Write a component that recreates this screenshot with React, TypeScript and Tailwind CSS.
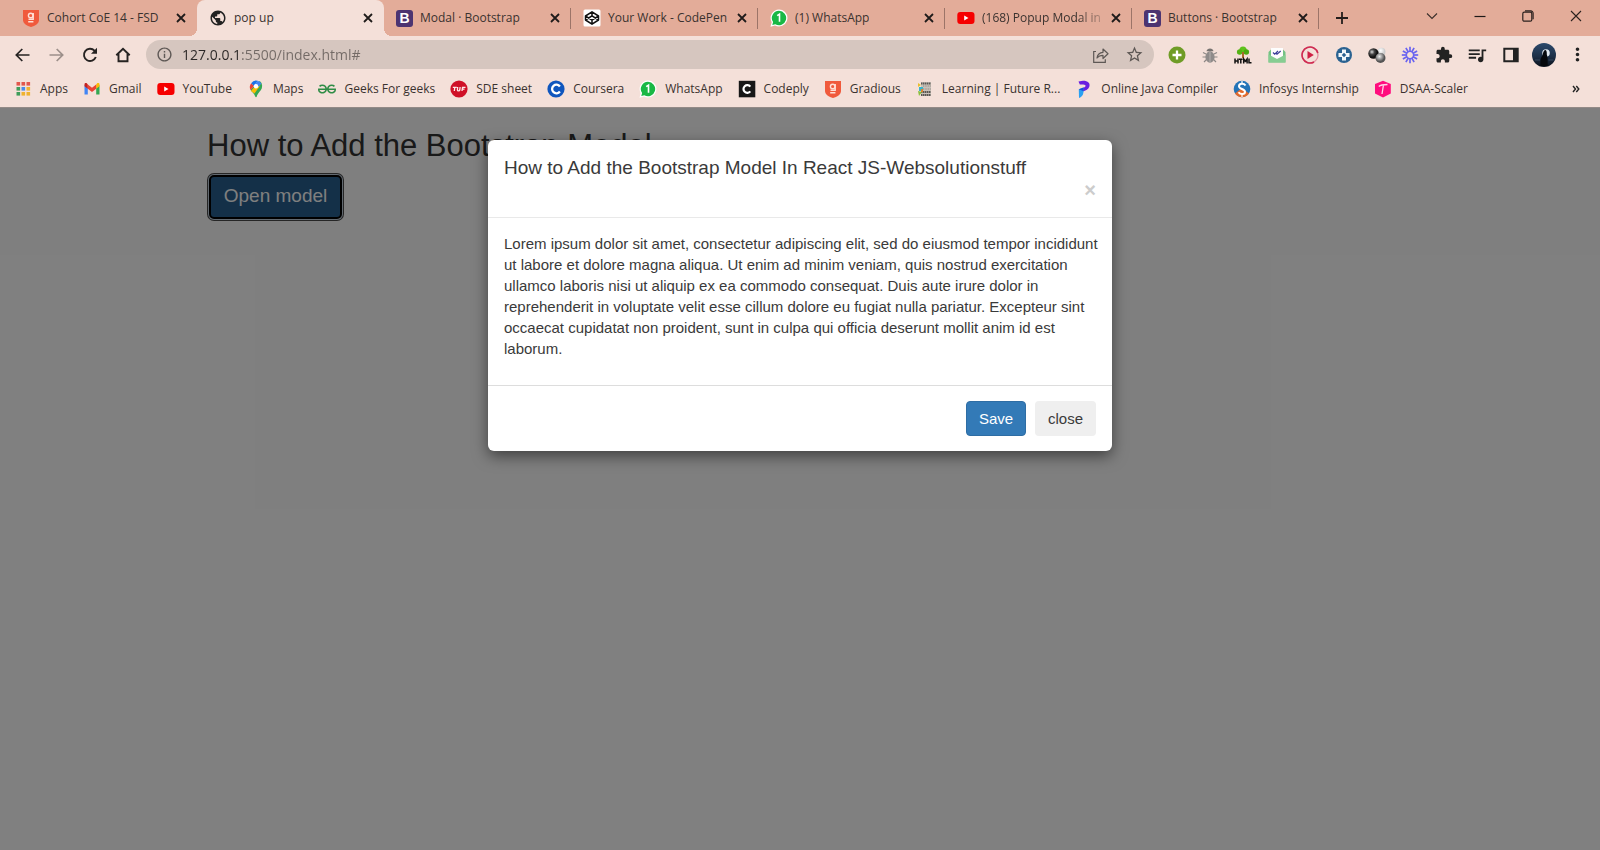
import React from 'react';
import { MdPublic, MdExtension, MdQueueMusic, MdInfoOutline, MdStarBorder, MdMoreVert } from 'react-icons/md';
import { SiGeeksforgeeks } from 'react-icons/si';

const svg = 'block h-[18px] w-[18px] shrink-0';

const ShieldIcon = () => (
  <svg viewBox="0 0 18 18" className={svg}>
    <path d="M1 1h16v10c0 3.500-4 6-8 7-4-1-8-3.500-8-7z" fill="#f05a3c" />
    <circle cx="8.700" cy="6.500" r="2.300" fill="none" stroke="#ffe0d6" strokeWidth="1.400" />
    <path d="M11.200 4v6.200H6.500M6.200 12.800h5.200" fill="none" stroke="#ffe0d6" strokeWidth="1.400" />
  </svg>
);

const BootstrapIcon = () => (
  <span className="flex h-[17px] w-[17px] shrink-0 items-center justify-center rounded-[3px] bg-[#4c3471] font-['Liberation_Sans',sans-serif] text-[14px] leading-none font-bold text-white">
    B
  </span>
);

const CodepenIcon = () => (
  <svg viewBox="0 0 18 18" className={svg} fill="none" stroke="#111" strokeWidth="1.500" strokeLinejoin="round">
    <rect x=".5" y=".5" width="17" height="17" rx="1.500" fill="#fff" stroke="none" />
    <path d="M9 2.800 15.500 7v4L9 15.200 2.500 11V7zM2.500 7 9 11.200 15.500 7M2.500 11 9 6.800l6.500 4.200M9 2.800v4M9 11.200v4" />
  </svg>
);

const WhatsAppIcon = () => (
  <svg viewBox="0 0 18 18" className={svg}>
    <path d="M9 .5a8.500 8.500 0 0 1 0 17c-1.500 0-2.800-.3-4-1L.5 17.700 1.700 13.200A8.500 8.500 0 0 1 9 .5z" fill="#fff" />
    <path d="M9 1.800a7.200 7.200 0 1 1-3.700 13.400L2.300 16l.8-2.900A7.200 7.200 0 0 1 9 1.800z" fill="#19b845" />
    <path d="M7.200 6.700 9.500 5.200v7.600" fill="none" stroke="#fff" strokeWidth="1.600" />
  </svg>
);

const YoutubeIcon = () => (
  <svg viewBox="0 0 18 18" className={svg}>
    <rect x=".3" y="3" width="17.200" height="12" rx="3" fill="#f60000" />
    <path d="M7.200 6.500 11.500 9l-4.300 2.500z" fill="#fff" />
  </svg>
);

const appColors = ['#e2574c', '#e2574c', '#e2574c', '#3f9d5a', '#4a8bea', '#efb22f', '#3f9d5a', '#efb22f', '#efb22f'];
const AppsIcon = () => (
  <svg viewBox="0 0 18 18" className={svg}>
    {appColors.map((color, i) => (
      <rect key={i} x={2.500 + (i % 3) * 5} y={2 + Math.floor(i / 3) * 5} width="3.600" height="3.600" fill={color} />
    ))}
  </svg>
);

const GmailIcon = () => (
  <svg viewBox="0 0 18 18" className={svg}>
    <path d="M1.500 5v9.500h3.300V8z" fill="#4285f4" />
    <path d="M16.500 5v9.500h-3.300V8z" fill="#34a853" />
    <path d="M13.200 4.500v4.300L16.500 6.200V4.500c0-1.500-1.500-1.800-2.300-1.200z" fill="#fbbc04" />
    <path d="M4.800 4.500 9 7.700l4.200-3.200v4.300L9 12 4.800 8.800z" fill="#ea4335" />
    <path d="M1.500 4.500v1.700l3.300 2.600V4.500l-1-1.200c-.9-.6-2.300-.3-2.300 1.200z" fill="#c5221f" />
  </svg>
);

const MapsIcon = () => (
  <svg viewBox="0 0 18 18" className={svg}>
    <path d="M3.400 9.800 12.800.9A6 6 0 0 1 15 6.700c0 4-4.300 5.500-5.300 10.100-.2.600-1.200.6-1.400 0-.7-3-3.300-4.700-4.900-7z" fill="#34a853" />
    <path d="M4.300 10.900 12 4.500A3 3 0 0 1 9 9z" fill="#fbbc04" />
    <path d="m4 11 3-3.400 4 1L7.500 13.500z" fill="#fbbc04" />
    <path d="M4.200 3.200 7.100 6l-3.500 4A6.300 6.300 0 0 1 4.200 3.200z" fill="#ea4335" />
    <path d="M4.200 3.200A6 6 0 0 1 10.700.8L7 6z" fill="#1a73e8" />
    <path d="M10.700.8a6 6 0 0 1 3.600 3L11 7 8 4z" fill="#4285f4" />
    <circle cx="9" cy="6.300" r="2.200" fill="#fff" />
  </svg>
);

const TufIcon = () => (
  <svg viewBox="0 0 18 18" className={svg}>
    <circle cx="9" cy="9" r="8.600" fill="#cf1027" />
    <path d="M2.800 7.300h4M4.800 7.300l-.5 3.700M7.700 7l-.3 3q0 .9 1.100.9t1.300-.9l.3-3M12 11l.5-3.700h3M12.300 9.200h2.200" fill="none" stroke="#ffe9e9" strokeWidth="1.300" />
  </svg>
);

const CourseraIcon = () => (
  <svg viewBox="0 0 18 18" className={svg}>
    <circle cx="9" cy="9" r="8.600" fill="#0f56be" />
    <path d="M12.900 11.500A4.300 4.300 0 1 1 12.900 6.500" fill="none" stroke="#fff" strokeWidth="2.300" />
  </svg>
);

const CodeplyIcon = () => (
  <svg viewBox="0 0 18 18" className={svg}>
    <path d="M.8.8h16.500v16.500H.8z" fill="#171717" />
    <path d="M12.300 11.300A3.800 3.800 0 1 1 12.300 6.700" fill="none" stroke="#fff" strokeWidth="2.200" />
  </svg>
);

const LearningIcon = () => (
  <svg viewBox="0 0 18 18" className={svg}>
    <path d="M5 2h10v14H5z" fill="#c9c1b9" />
    <path d="M5 3.500h10M5 12h10M5 15h10" stroke="#5b5753" strokeWidth="2" strokeDasharray="1.500 .5" />
    <path d="M7 6h8M7 9h8" stroke="#a39c95" strokeWidth="1.500" strokeDasharray="1 .7" />
    <path d="m2 3 3 2-3 2z" fill="#e8bf2b" />
    <path d="M3 7h4v4H3z" fill="#38b6c9" />
    <path d="m2 11 4 1-3 4z" fill="#8bbf3d" />
    <path d="M5 9h2v3H5z" fill="#e2832d" />
  </svg>
);

const ProgramizIcon = () => (
  <svg viewBox="0 0 18 18" className={svg}>
    <path d="M3.500 1.500 8 .8c5 0 7.500 2.400 6.300 6-.9 2.600-3.300 4-6.800 4.700V8C9.800 7.600 10.800 6.800 10.500 5.600 10 4.300 7 4.600 4.800 4.600z" fill="#6a1fe0" />
    <path d="M3.800 9.200 8.500 7.500v4c-.2 3-1 5-4.500 6.500z" fill="#2aa0f2" />
    <path d="M3.800 9.200 8.500 7.500v3.700z" fill="#1b4fd8" />
  </svg>
);

const InfosysIcon = () => (
  <svg viewBox="0 0 18 18" className={svg}>
    <circle cx="9" cy="9" r="8.300" fill="#2374b8" />
    <path d="M2 13.500A8.300 8.300 0 0 0 16 13.500L9 8z" fill="#e26a2c" />
    <path d="M12.500 5.500C11 3 6 3 6 6.200c0 3 6 2.600 6 5.600 0 3-4.800 3-6.500.4" fill="none" stroke="#fff" strokeWidth="2" />
    <path d="M9 1v3M9 14v3" stroke="#fff" strokeWidth="1.200" />
  </svg>
);

const ScalerIcon = () => (
  <svg viewBox="0 0 18 18" className={svg}>
    <path d="M9 .7 16.800 4v9.500L9 17.500 1 13.500V4z" fill="#ff0d7e" strokeLinejoin="round" />
    <path d="M4.800 6.500c2-2 5-2 8.700-2M9.500 4.800 8 14" fill="none" stroke="#ffd3e8" strokeWidth="1.300" />
  </svg>
);

const ShareIcon = () => (
  <svg viewBox="0 0 18 18" className={svg} fill="none" stroke="#5e5855" strokeWidth="1.200">
    <path d="M4 5.500H1.700v10.800h11.600v-3" />
    <path d="M5 12c.5-3.500 2.500-5.500 6-5.700V3l5 4.800-5 4.700V9.300c-2.500 0-4.500.8-6 2.700z" strokeLinejoin="round" />
  </svg>
);

const BackIcon = ({ forward = false }: { forward?: boolean }) => (
  <svg viewBox="0 0 18 18" className={svg} fill="none" stroke={forward ? '#9c8f8a' : '#262322'} strokeWidth="1.700">
    <path d={forward ? 'M2.500 9h13M9.700 3 15.700 9l-6 6' : 'M15.500 9h-13M8.300 3 2.300 9l6 6'} />
  </svg>
);

const ReloadIcon = () => (
  <svg viewBox="0 0 18 18" className={svg}>
    <path d="M14.800 11A6.100 6.100 0 1 1 13.500 4.700L15 6.300" fill="none" stroke="#262322" strokeWidth="1.900" />
    <path d="M16 1.800v6h-6z" fill="#262322" />
  </svg>
);

const HomeIcon = () => (
  <svg viewBox="0 0 18 18" className={svg} fill="none" stroke="#262322" strokeWidth="1.900">
    <path d="M2.300 9.300 9 2.800l6.700 6.500M4.500 8v7.300h9V8" />
  </svg>
);

const CloseIcon = () => (
  <svg viewBox="0 0 14 14" className="block h-[14px] w-[14px]">
    <path d="m3 3 8 8M11 3l-8 8" stroke="#1f1b1a" strokeWidth="1.800" />
  </svg>
);

const AddIcon = () => (
  <svg viewBox="0 0 18 18" className={svg}>
    <circle cx="9" cy="9" r="8.500" fill="#6f9c26" />
    <path d="M9 4.500v9M4.500 9h9" stroke="#fff" strokeWidth="2.300" />
  </svg>
);

const BugIcon = () => (
  <svg viewBox="0 0 18 18" className={svg}>
    <path d="M2 6.500 5 8M1.500 11H5M3 16l2.500-2.500M16 6.500 13 8M16.500 11H13M15 16l-2.500-2.500" stroke="#8d8886" strokeWidth="1.200" />
    <ellipse cx="9" cy="11" rx="4.600" ry="5.800" fill="#8f8b8a" />
    <path d="M5.500 5.300a3.600 3.600 0 0 1 7 0z" fill="#777371" />
    <path d="M9 6v10.500" stroke="#b6b1af" />
  </svg>
);

const TreeIcon = () => (
  <svg viewBox="0 0 18 18" className={svg}>
    <circle cx="9" cy="4" r="3.600" fill="#5fc21c" />
    <circle cx="5.700" cy="6" r="2.800" fill="#55b315" />
    <circle cx="12.300" cy="6" r="2.800" fill="#4aa811" />
    <path d="M8 6h2v6H8z" fill="#a8682b" />
    <path d="M1 12.500v5M4 12.500v5M1 15h3M5 13.200h3.600M6.800 13.200v4.300M9.700 17.500V13l1.700 2.300 1.700-2.300v4.500M15 12.500v4.300h2.500" fill="none" stroke="#111" strokeWidth="1.500" />
  </svg>
);

const MailCheckIcon = () => (
  <svg viewBox="0 0 18 18" className={svg}>
    <path d="M.5 6 3 3.500v8H15v-8L17.500 6v10.500H.5z" fill="#74c283" />
    <path d="M3 2h12v9l-6 3-6-3z" fill="#fdfdfd" />
    <path d="M.5 8.500 9 13l8.500-4.500v8H.5z" fill="#86cd92" />
    <path d="m5 6.500 1.700 1.700L10 5M8.200 7.500l.8.700L12.700 5" fill="none" stroke="#3b3f9b" strokeWidth="1.200" />
  </svg>
);

const PlayCircleIcon = () => (
  <svg viewBox="0 0 18 18" className={svg}>
    <circle cx="9" cy="9" r="8" fill="none" stroke="#e293a2" strokeWidth="1.300" />
    <path d="M16.800 7A8 8 0 1 0 13 16" fill="none" stroke="#cf2c52" strokeWidth="1.600" />
    <path d="m6.500 5 6.300 4-6.300 4z" fill="#cf2145" />
  </svg>
);

const MoveIcon = () => (
  <svg viewBox="0 0 18 18" className={svg}>
    <circle cx="9" cy="9" r="8" fill="#2a6291" />
    <path d="M7 3.500h4V7h3.500v4H11v3.500H7V11H3.500V7H7z" fill="#f2f7fb" />
    <path d="M9 6.800 11.200 9 9 11.200 6.800 9z" fill="#2a6291" />
  </svg>
);

const BallsIcon = () => (
  <svg viewBox="0 0 18 18" className={svg}>
    <defs>
      <radialGradient id="dark" cx=".35" cy=".35"><stop offset="0" stopColor="#ddd" /><stop offset=".5" stopColor="#444" /><stop offset="1" stopColor="#111" /></radialGradient>
      <radialGradient id="mid" cx=".4" cy=".35"><stop offset="0" stopColor="#eee" /><stop offset="1" stopColor="#555" /></radialGradient>
      <radialGradient id="light" cx=".4" cy=".35"><stop offset="0" stopColor="#fff" /><stop offset="1" stopColor="#ccc" /></radialGradient>
    </defs>
    <circle cx="13.500" cy="5.800" r="4" fill="url(#light)" />
    <circle cx="5.500" cy="7.500" r="5.200" fill="url(#dark)" />
    <circle cx="12.500" cy="12" r="5" fill="url(#mid)" />
  </svg>
);

const burst = Array.from({ length: 12 }, (_, i) => i * 30);
const LoomIcon = () => (
  <svg viewBox="0 0 18 18" className={svg} stroke="#6a64f0">
    {burst.map((a) => (
      <path key={a} d="M9 .8v5" strokeWidth="1.700" transform={`rotate(${a} 9 9)`} />
    ))}
    <circle cx="9" cy="9" r="3.600" fill="none" strokeWidth="1.400" />
  </svg>
);

const PanelIcon = () => (
  <svg viewBox="0 0 18 18" className={svg}>
    <path d="M2.300 2.800h13.400v12.400H2.300z" fill="none" stroke="#222" strokeWidth="2" />
    <path d="M11 2.500h5v13h-5z" fill="#222" />
  </svg>
);

const AvatarIcon = () => (
  <svg viewBox="0 0 24 24" className="h-[24px] w-[24px] shrink-0">
    <defs>
      <linearGradient id="night" x1="0" y1="0" x2="0" y2="1"><stop offset="0" stopColor="#2c4a6c" /><stop offset=".55" stopColor="#1d3048" /><stop offset="1" stopColor="#0b121c" /></linearGradient>
    </defs>
    <circle cx="12" cy="12" r="12" fill="url(#night)" />
    <circle cx="14" cy="10" r="3.800" fill="#dfe8f0" />
    <path d="M8.500 23c-.3-6 .2-8.500 2-10.500.3-3 1.500-5.500 2.700-5.500s1.800 2 1.600 4.500c1 2 .9 7 .9 11.500z" fill="#05080c" />
    <path d="M3 17h5M16.500 17h5" stroke="#4a6079" strokeWidth=".6" />
  </svg>
);

const tabs = [
  { title: 'Cohort CoE 14 - FSD', icon: <ShieldIcon /> },
  { title: 'pop up', icon: <MdPublic size={18} className="shrink-0 text-[#222]" />, active: true },
  { title: 'Modal · Bootstrap', icon: <BootstrapIcon />, divider: true },
  { title: 'Your Work - CodePen', icon: <CodepenIcon />, divider: true },
  { title: '(1) WhatsApp', icon: <WhatsAppIcon />, divider: true },
  { title: '(168) Popup Modal in', icon: <YoutubeIcon />, divider: true, faded: true },
  { title: 'Buttons · Bootstrap', icon: <BootstrapIcon />, divider: true },
];

const bookmarks = [
  { title: 'Apps', icon: <AppsIcon /> },
  { title: 'Gmail', icon: <GmailIcon /> },
  { title: 'YouTube', icon: <YoutubeIcon /> },
  { title: 'Maps', icon: <MapsIcon /> },
  { title: 'Geeks For geeks', icon: <SiGeeksforgeeks size={18} className="shrink-0 text-[#2f8d46]" /> },
  { title: 'SDE sheet', icon: <TufIcon /> },
  { title: 'Coursera', icon: <CourseraIcon /> },
  { title: 'WhatsApp', icon: <WhatsAppIcon /> },
  { title: 'Codeply', icon: <CodeplyIcon /> },
  { title: 'Gradious', icon: <ShieldIcon /> },
  { title: 'Learning | Future R...', icon: <LearningIcon /> },
  { title: 'Online Java Compiler', icon: <ProgramizIcon /> },
  { title: 'Infosys Internship', icon: <InfosysIcon /> },
  { title: 'DSAA-Scaler', icon: <ScalerIcon /> },
];

const extensions = [
  { name: 'Add', icon: <AddIcon /> },
  { name: 'Bug tracker', icon: <BugIcon /> },
  { name: 'HTML tree', icon: <TreeIcon /> },
  { name: 'Mail tracker', icon: <MailCheckIcon /> },
  { name: 'Player', icon: <PlayCircleIcon /> },
  { name: 'Controls', icon: <MoveIcon /> },
  { name: 'Color balls', icon: <BallsIcon /> },
  { name: 'Loom', icon: <LoomIcon /> },
  { name: 'Extensions', icon: <MdExtension size={18} /> },
  { name: 'Media', icon: <MdQueueMusic size={22} /> },
  { name: 'Side panel', icon: <PanelIcon /> },
  { name: 'Profile', icon: <AvatarIcon /> },
  { name: 'Menu', icon: <MdMoreVert size={21} /> },
];

function TabStrip() {
  return (
    <div className="relative flex h-9 overflow-hidden bg-[#e3ac99] pl-[10px]">
      <div role="tablist" className="flex min-w-0">
        {tabs.map((tab) => (
          <div
            key={tab.title}
            className={`relative flex w-[187px] min-w-0 items-center pr-[9px] pl-3 ${tab.active ? 'rounded-t-lg bg-[#f4e0d9]' : ''}`}
          >
            {tab.active && (
              <>
                <span className="absolute bottom-0 -left-2 h-2 w-2 bg-[radial-gradient(circle_at_0_0,#e3ac99_8px,#f4e0d9_8px)]" />
                <span className="absolute -right-2 bottom-0 h-2 w-2 bg-[radial-gradient(circle_at_100%_0,#e3ac99_8px,#f4e0d9_8px)]" />
              </>
            )}
            <button role="tab" aria-selected={!!tab.active} className="flex min-w-0 flex-1 items-center gap-[7px] text-left">
              {tab.icon}
              <span
                className={`overflow-hidden whitespace-nowrap ${tab.faded ? 'mask-[linear-gradient(to_right,black_80%,transparent_108%)]' : ''}`}
              >
                {tab.title}
              </span>
            </button>
            <button aria-label={`Close ${tab.title}`}>
              <CloseIcon />
            </button>
            {tab.divider && <span className="absolute top-2 right-0 h-[21px] w-px bg-[#9c7468]" />}
          </div>
        ))}
      </div>
      <button aria-label="New tab" className="ml-4 self-center">
        <svg viewBox="0 0 14 14" className="h-[14px] w-[14px]"><path d="M7 1v12M1 7h12" stroke="#241e1c" strokeWidth="1.800" /></svg>
      </button>
      <div className="ml-auto flex h-8 items-center">
        <button aria-label="Search tabs" className="flex w-12 justify-center">
          <svg viewBox="0 0 12 12" className="h-3 w-3"><path d="m1 3.500 5 5 5-5" fill="none" stroke="#3a2e2a" strokeWidth="1.100" /></svg>
        </button>
        <button aria-label="Minimize" className="flex w-12 justify-center">
          <svg viewBox="0 0 12 12" className="h-3 w-3"><path d="M.5 6.500h11" stroke="#1f1917" strokeWidth="1.200" /></svg>
        </button>
        <button aria-label="Restore" className="flex w-12 justify-center">
          <svg viewBox="0 0 12 12" className="h-3 w-3" fill="none" stroke="#2b211e" strokeWidth="1.200"><rect x=".8" y="2.200" width="9" height="9" rx="1.500" /><path d="M3 .9h5.800a2.300 2.300 0 0 1 2.300 2.300v6" /></svg>
        </button>
        <button aria-label="Close window" className="flex w-12 justify-center">
          <svg viewBox="0 0 12 12" className="h-3 w-3"><path d="m1 1 10 10M11 1 1 11" stroke="#2b211e" strokeWidth="1.100" /></svg>
        </button>
      </div>
    </div>
  );
}

function Toolbar() {
  return (
    <div className="flex h-[37px] items-center pr-[6px] pl-[6px]">
      <nav aria-label="Navigation" className="flex w-[140px] pr-[6px]">
        <button aria-label="Back" className="flex flex-1 justify-center"><BackIcon /></button>
        <button aria-label="Forward" className="flex flex-1 justify-center"><BackIcon forward /></button>
        <button aria-label="Reload" className="flex flex-1 justify-center"><ReloadIcon /></button>
        <button aria-label="Home" className="flex flex-1 justify-center"><HomeIcon /></button>
      </nav>
      <div className="flex h-[29px] flex-1 items-center rounded-full bg-[#d6c6bf] px-[10px] text-[#5e5855]">
        <MdInfoOutline size={17} className="shrink-0" />
        <input
          aria-label="Address"
          defaultValue="127.0.0.1:5500/index.html#"
          className="min-w-0 flex-1 bg-[linear-gradient(to_right,#2b2726_67px,#736a66_67px)] bg-clip-text pl-[9px] text-sm text-transparent outline-none"
        />
        <button aria-label="Share"><ShareIcon /></button>
        <button aria-label="Bookmark this page" className="ml-[15px]"><MdStarBorder size={19} /></button>
      </div>
      <div className="ml-[6px] flex w-[434px] items-center text-[#222]">
        {extensions.map((item) => (
          <button key={item.name} aria-label={item.name} className="flex flex-1 justify-center">
            {item.icon}
          </button>
        ))}
      </div>
    </div>
  );
}

function Bookmarks() {
  return (
    <nav aria-label="Bookmarks" className="flex h-[34px] items-center pr-5 pb-[3px] pl-[14px]">
      <ul className="flex gap-[15px]">
        {bookmarks.map((item) => (
          <li key={item.title}>
            <a href="#" className="flex items-center gap-2 whitespace-nowrap">
              {item.icon}
              {item.title}
            </a>
          </li>
        ))}
      </ul>
      <button aria-label="More bookmarks" className="ml-auto">
        <svg viewBox="0 0 8 8" className="h-2 w-2"><path d="m1 1 2.500 3L1 7M4.300 1l2.500 3-2.500 3" fill="none" stroke="#222" strokeWidth="1.400" /></svg>
      </button>
    </nav>
  );
}

function Modal() {
  return (
    <div
      role="dialog"
      aria-labelledby="modal-title"
      className="mx-auto mt-8 w-[624px] max-w-full rounded-md bg-white text-[15px] leading-[21px] text-[#3a3a3a] shadow-[0_5px_15px_rgba(0,0,0,0.5)]"
    >
      <div className="flex h-[78px] flex-col border-b border-[#e9e9e9] px-4 pt-[15px]">
        <h4 id="modal-title" className="text-[19px] leading-[25px]">How to Add the Bootstrap Model In React JS-Websolutionstuff</h4>
        <button aria-label="Close" className="self-end text-[20px] leading-[21px] font-bold text-[#ccc]">×</button>
      </div>
      <div className="pt-[15px] pr-3 pb-[26px] pl-4">
        <p>
          Lorem ipsum dolor sit amet, consectetur adipiscing elit, sed do eiusmod tempor incididunt ut labore et dolore magna
          aliqua. Ut enim ad minim veniam, quis nostrud exercitation ullamco laboris nisi ut aliquip ex ea commodo consequat.
          Duis aute irure dolor in reprehenderit in voluptate velit esse cillum dolore eu fugiat nulla pariatur. Excepteur sint
          occaecat cupidatat non proident, sunt in culpa qui officia deserunt mollit anim id est laborum.
        </p>
      </div>
      <div className="flex justify-end gap-[9px] border-t border-[#ddd] px-4 pt-[15px] pb-[15px]">
        <button className="h-[35px] w-[60px] rounded-[4px] border border-[#2e6da4] bg-[#337ab7] pb-px text-white">Save</button>
        <button className="h-[35px] w-[61px] rounded-[4px] bg-[#efefef] pb-px">close</button>
      </div>
    </div>
  );
}

export default function App() {
  return (
    <div className="flex min-h-screen flex-col font-['Liberation_Sans',Arial,sans-serif]">
      <header className="border-b border-[#938a87] bg-[#f4e0d9] font-['Open_Sans','Noto_Sans',sans-serif] text-xs text-[#3a322f]">
        <TabStrip />
        <Toolbar />
        <Bookmarks />
      </header>
      <main className="relative flex-1 bg-white">
        <div className="mx-auto w-[1218px] max-w-full px-4 pt-5">
          <h2 className="text-[31px] leading-[35px] text-[#333]">How to Add the Bootstrap Model</h2>
          <button className="mt-3 ml-[2px] h-[44px] w-[133px] rounded-[5px] border-2 border-black bg-[#286090] pb-px text-[19px] text-white shadow-[0_0_0_1px_#c4d2e0,0_0_0_2px_#4d4d4d]">
            Open model
          </button>
        </div>
        <div className="absolute inset-0 bg-black/50">
          <Modal />
        </div>
      </main>
    </div>
  );
}
